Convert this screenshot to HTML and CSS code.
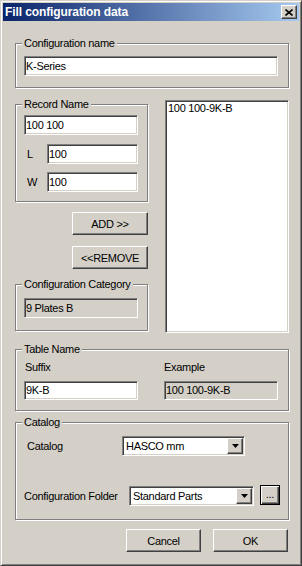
FILE: index.html
```html
<!DOCTYPE html>
<html>
<head>
<meta charset="utf-8">
<link rel="stylesheet" href="styles.css">
</head>
<body>
<div class="window">
  <div class="titlebar">
    <span class="title">Fill configuration data</span>
    <span class="btn close"><svg width="8" height="7" viewBox="0 0 8 7"><path d="M0.5 0.5 L7.5 6.5 M7.5 0.5 L0.5 6.5" stroke="#000" stroke-width="1.6" fill="none"/></svg></span>
  </div>
  <div class="client">
    <div class="grp g-cfg">
      <div class="legend">Configuration name</div>
      <div class="field f-wide">K-Series</div>
    </div>

    <div class="mid">
      <div class="leftcol">
        <div class="grp g-rec">
          <div class="legend">Record Name</div>
          <div class="field f-rec">100 100</div>
          <div class="row r-l"><span class="lbl">L</span><div class="field f-small">100</div></div>
          <div class="row r-w"><span class="lbl">W</span><div class="field f-small">100</div></div>
        </div>
        <div class="btn b-side b-add">ADD &gt;&gt;</div>
        <div class="btn b-side b-rem">&lt;&lt;REMOVE</div>
        <div class="grp g-cat">
          <div class="legend">Configuration Category</div>
          <div class="field disabled f-rec f-cat">9 Plates B</div>
        </div>
      </div>
      <div class="field listbox"><div class="item">100 100-9K-B</div></div>
    </div>

    <div class="grp g-table">
      <div class="legend">Table Name</div>
      <div class="cols">
        <div class="col"><div class="cap">Suffix</div><div class="field f-col">9K-B</div></div>
        <div class="col col2"><div class="cap">Example</div><div class="field disabled f-col">100 100-9K-B</div></div>
      </div>
    </div>

    <div class="grp g-catalog">
      <div class="legend">Catalog</div>
      <div class="crow crow1">
        <span class="clbl clbl1">Catalog</span>
        <div class="field combo combo1"><span class="ctext">HASCO mm</span><span class="btn dd"><svg width="7" height="4" viewBox="0 0 7 4"><polygon points="0,0 7,0 3.5,4" fill="#000"/></svg></span></div>
      </div>
      <div class="crow crow2">
        <span class="clbl clbl2">Configuration Folder</span>
        <div class="field combo combo2"><span class="ctext">Standard Parts</span><span class="btn dd"><svg width="7" height="4" viewBox="0 0 7 4"><polygon points="0,0 7,0 3.5,4" fill="#000"/></svg></span></div>
        <div class="btn browse">...</div>
      </div>
    </div>

    <div class="footer">
      <div class="btn b-foot">Cancel</div>
      <div class="btn b-foot">OK</div>
    </div>
  </div>
</div>
</body>
</html>
```

FILE: styles.css
```css
html, body {
  margin: 0;
  padding: 0;
  background: #D4D0C8;
}

body {
  font-family: "Liberation Sans", Arial, sans-serif;
  font-size: 11px;
  letter-spacing: -0.3px;
  color: #000;
}

.window {
  box-sizing: border-box;
  width: 302px;
  height: 566px;
  background: #D4D0C8;
  border: 1px solid;
  border-color: #D4D0C8 #404040 #404040 #D4D0C8;
  box-shadow: inset 1px 1px 0 #fff, inset -1px -1px 0 #808080;
  padding: 2px;
}

.titlebar {
  height: 18px;
  display: flex;
  align-items: center;
  padding: 0 2px 0 2px;
  background: linear-gradient(to right, #0A246A, #A6CAF0);
}

.title {
  color: #fff;
  font-weight: bold;
  font-size: 12px;
  letter-spacing: -0.1px;
  line-height: 18px;
}

.btn {
  box-sizing: border-box;
  background: #D4D0C8;
  border: 1px solid;
  border-color: #fff #404040 #404040 #fff;
  box-shadow: inset -1px -1px 0 #808080;
  display: flex;
  align-items: center;
  justify-content: center;
}

.close {
  margin-left: auto;
  width: 16px;
  height: 14px;
}

.client {
  padding: 0 10px 0 12px;
}

.grp {
  border: 1px solid #808080;
  box-shadow: inset 1px 1px 0 #fff, 1px 1px 0 #fff;
}

.legend {
  width: fit-content;
  height: 13px;
  line-height: 13px;
  margin: -7px 0 0 -2px;
  padding: 0 2px;
  background: #D4D0C8;
  white-space: nowrap;
}

.field {
  box-sizing: border-box;
  height: 20px;
  line-height: 18px;
  border: 1px solid;
  border-color: #808080 #fff #fff #808080;
  box-shadow: inset 1px 1px 0 #404040, inset -1px -1px 0 #D4D0C8;
  background: #fff;
  padding: 0 1px;
  white-space: nowrap;
  overflow: hidden;
}

.field.disabled {
  background: #D4D0C8;
}

/* Configuration name */
.g-cfg {
  margin-top: 22px;
  padding: 0 10px 11px 8px;
}
.g-cfg .field {
  margin-top: 6px;
  width: 254px;
}

/* middle */
.mid {
  margin-top: 12px;
  display: flex;
  gap: 17px;
  align-items: flex-start;
}

.leftcol {
  width: 133px;
  display: flex;
  flex-direction: column;
}

.g-rec {
  margin-top: 4px;
  padding: 0 0 9px 8px;
}

.f-rec {
  width: 114px;
  margin-top: 4px;
}

.row {
  display: flex;
  align-items: center;
}
.r-l { margin-top: 9px; }
.r-w { margin-top: 8px; }

.lbl {
  width: 20px;
  padding-left: 3px;
}

.f-small {
  width: 91px;
}

.b-side {
  width: 76px;
  height: 23px;
  align-self: flex-end;
}
.b-add { margin-top: 10px; }
.b-rem { margin-top: 11px; }

.g-cat {
  margin-top: 15px;
  padding: 0 0 12px 8px;
}
.f-cat {
  margin-top: 7px;
}

.listbox {
  width: 124px;
  height: 233px;
  padding: 1px 2px;
  line-height: 13px;
}

/* Table Name */
.g-table {
  margin-top: 16px;
  padding: 0 10px 10px 8px;
}
.cols {
  display: flex;
  gap: 26px;
}
.col {
  width: 114px;
}
.cap {
  margin-top: 5px;
  height: 13px;
  line-height: 13px;
  padding-left: 1px;
}
.col2 .cap {
  margin-left: -1px;
}
.f-col {
  margin-top: 7px;
  height: 19px;
  line-height: 17px;
}

/* Catalog */
.g-catalog {
  margin-top: 11px;
  padding: 0 8px 13px 8px;
}
.crow {
  display: flex;
  align-items: center;
}
.crow1 { margin-top: 7px; }
.crow2 { margin-top: 30px; }

.clbl1 {
  width: 95px;
  padding-left: 3px;
}
.clbl2 {
  width: 105px;
}

.combo {
  display: flex;
  align-items: center;
  padding: 1px;
}
.combo1 { width: 123px; }
.combo2 { width: 125px; }

.ctext {
  flex: 1;
  padding-left: 2px;
  line-height: 16px;
}

.dd {
  width: 16px;
  height: 16px;
  flex: none;
}

.browse {
  width: 20px;
  height: 20px;
  margin-left: 6px;
  margin-top: -2px;
  border: 1px solid #000;
  box-shadow: inset 1px 1px 0 #fff, inset -1px -1px 0 #404040, inset -2px -2px 0 #808080;
  line-height: 14px;
  align-items: flex-end;
  padding-bottom: 3px;
}

/* footer */
.footer {
  margin-top: 9px;
  display: flex;
  justify-content: flex-end;
  gap: 12px;
  padding-right: 1px;
}
.b-foot {
  width: 75px;
  height: 23px;
}
```
